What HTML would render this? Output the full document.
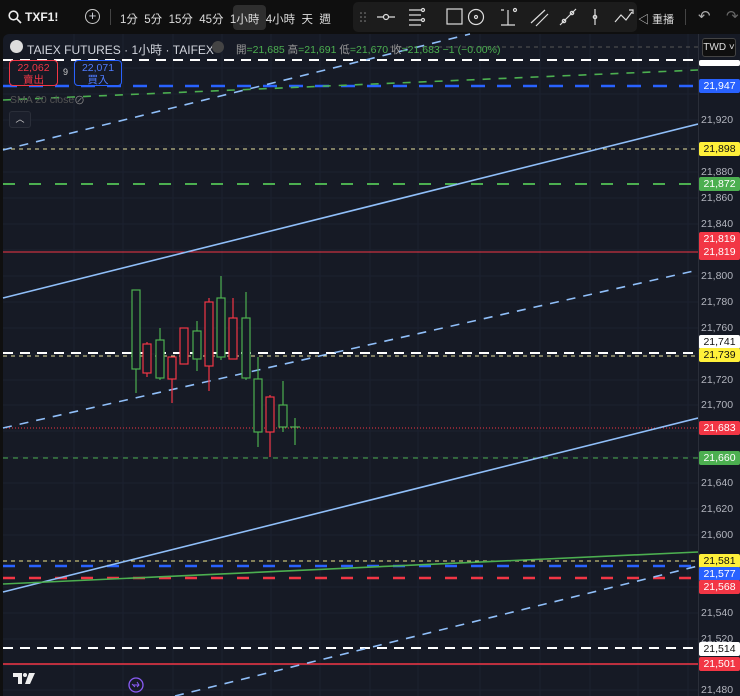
<!DOCTYPE html>
<html><head><meta charset="utf-8"><style>
*{margin:0;padding:0;box-sizing:border-box}
body{width:740px;height:696px;background:#0f0f0f;overflow:hidden;position:relative;font-family:"Liberation Sans","Noto Sans CJK TC",sans-serif;color:#d1d4dc}
.t{position:absolute;font-size:11px;white-space:nowrap}
.lab{position:absolute;left:699px;width:41px;height:14px;font-size:10.5px;line-height:14px;text-align:center;border-radius:2px}
.ax{position:absolute;left:701px;font-size:10.5px;color:#b2b5be}
</style></head><body>
<!-- top bar -->
<svg style="position:absolute;left:8px;top:10px" width="14" height="14" fill="none" stroke="#eee" stroke-width="1.6"><circle cx="5.5" cy="5.5" r="4.3"/><path d="M8.7 8.7L13 13"/></svg>
<div class="t" style="left:25px;top:10px;font-size:12px;font-weight:bold;color:#eee">TXF1!</div>
<div class="t" style="left:85px;top:9px;width:15px;height:15px;border:1.3px solid #ccc;border-radius:50%;text-align:center;line-height:12px;font-size:13px">+</div>
<div style="position:absolute;left:110px;top:9px;width:1px;height:16px;background:#444"></div>
<div style="position:absolute;left:233px;top:5px;width:33px;height:25px;background:#2e2e2e;border-radius:4px"></div>
<div class="t" style="left:120px;top:11px;font-size:11.5px;color:#ddd;word-spacing:0">1分&nbsp;&nbsp;5分&nbsp;&nbsp;15分&nbsp;&nbsp;45分&nbsp;&nbsp;1小時&nbsp;&nbsp;4小時&nbsp;&nbsp;天&nbsp;&nbsp;週</div>
<div style="position:absolute;left:353px;top:2px;width:284px;height:30px;background:#1c1c1c;border-radius:5px"></div>
<svg style="position:absolute;left:353px;top:2px" width="290" height="30" fill="none" stroke="#ddd" stroke-width="1.2">
<g fill="#888" stroke="none"><circle cx="8" cy="11" r=".8"/><circle cx="12" cy="11" r=".8"/><circle cx="8" cy="15" r=".8"/><circle cx="12" cy="15" r=".8"/><circle cx="8" cy="19" r=".8"/><circle cx="12" cy="19" r=".8"/></g>
<path d="M24 15h6M36 15h6"/><circle cx="33" cy="15" r="2.5"/>
<path d="M56 8h12M56 13h12M56 18h12M56 23h12"/><circle cx="70" cy="8" r="1.5"/><circle cx="70" cy="18" r="1.5"/>
<rect x="94" y="7" width="15" height="15"/>
<circle cx="123" cy="15" r="7.5"/><circle cx="123" cy="15" r="1.5"/>
<path d="M148 23h14M155 23V8M148 8h3"/><circle cx="162" cy="8" r="1.5"/>
<path d="M178 21l14-13M183 24l12-12"/>
<path d="M207 23l16-16"/><circle cx="211" cy="19" r="1.7"/><circle cx="219" cy="11" r="1.7"/>
<path d="M242 7v16"/><circle cx="242" cy="15" r="1.7"/>
<path d="M262 20l6-7 5 5 6-8M276 8h4v4"/>
</svg>
<div class="t" style="left:638px;top:11px;font-size:11px;color:#ddd">&#9665; 重播</div>
<div style="position:absolute;left:685px;top:9px;width:1px;height:16px;background:#444"></div>
<div class="t" style="left:698px;top:7px;font-size:15px;color:#aaa">&#8630;</div>
<div class="t" style="left:726px;top:7px;font-size:15px;color:#666">&#8631;</div>
<!-- chart -->
<div style="position:absolute;left:3px;top:34px;width:737px;height:662px;background:#161a25;border-radius:6px 0 0 0"></div>
<div style="position:absolute;left:698px;top:34px;width:1px;height:662px;background:#2a2e39"></div>
<svg style="position:absolute;left:0;top:0" width="698" height="696">
<g stroke="#1c2130" stroke-width="1">
<path d="M3 68H698M3 94H698M3 120H698M3 146H698M3 172H698M3 198H698M3 224H698M3 250H698M3 276H698M3 302H698M3 328H698M3 354H698M3 380H698M3 405H698M3 431H698M3 457H698M3 483H698M3 509H698M3 535H698M3 561H698M3 587H698M3 613H698M3 639H698M3 665H698M3 690H698"/>
<path d="M74 34V696M123 34V696M173 34V696M222 34V696M271 34V696M320 34V696M370 34V696M418 34V696M480 34V696M540 34V696M590 34V696M638 34V696M688 34V696"/>
</g>
<path d="M390 47H698" stroke="#555" stroke-dasharray="4 4"/>
<path d="M3 60H698" stroke="#fff" stroke-width="2" stroke-dasharray="10 7"/>
<path d="M3 86H698" stroke="#2962ff" stroke-width="2.5" stroke-dasharray="14 12"/>
<path d="M3 149H698" stroke="#e8e3a0" stroke-dasharray="4 4"/>
<path d="M3 184H698" stroke="#4caf50" stroke-width="2" stroke-dasharray="12 14"/>
<path d="M3 252H698" stroke="#f23645" stroke-width="1"/>
<path d="M3 353H698" stroke="#fff" stroke-width="2" stroke-dasharray="10 7"/>
<path d="M3 356H698" stroke="#e8e3a0" stroke-dasharray="4 4"/>
<path d="M3 428H698" stroke="#f23645" stroke-dasharray="1 2"/>
<path d="M3 458H698" stroke="#4caf50" stroke-dasharray="5 5"/>
<path d="M3 561H698" stroke="#f0e68c" stroke-dasharray="4 4"/>
<path d="M3 566H698" stroke="#2962ff" stroke-width="2.5" stroke-dasharray="12 14"/>
<path d="M3 578H698" stroke="#f23645" stroke-width="2.5" stroke-dasharray="12 14"/>
<path d="M3 648H698" stroke="#fff" stroke-width="2" stroke-dasharray="10 7"/>
<path d="M3 664H698" stroke="#f23645" stroke-width="1.5"/>
<g stroke="#90bff9" stroke-width="1.6" fill="none">
<path d="M3 298L698 124"/>
<path d="M3 592L698 418"/>
<path d="M3 150L470 34" stroke-dasharray="9 8"/>
<path d="M3 428L698 270" stroke-dasharray="9 8"/>
<path d="M175 696L698 566" stroke-dasharray="9 8"/>
</g>
<path d="M3 584L698 552" stroke="#4caf50" stroke-width="1.6"/>
<path d="M3 100L698 70" stroke="#4caf50" stroke-width="1.6" stroke-dasharray="8 8"/>
<g fill="none" stroke-width="1.2">
<g stroke="#4caf50">
<path d="M136 290V393"/><rect x="132" y="290" width="8" height="79" fill="#161a25"/>
<path d="M160 328V380"/><rect x="156" y="340" width="8" height="38" fill="#161a25"/>
<path d="M197 321V371"/><rect x="193" y="331" width="8" height="28" fill="#161a25"/>
<path d="M221 276V360"/><rect x="217" y="298" width="8" height="59" fill="#161a25"/>
<path d="M246 292V380"/><rect x="242" y="318" width="8" height="60" fill="#161a25"/>
<path d="M258 357V447"/><rect x="254" y="379" width="8" height="53" fill="#161a25"/>
<path d="M283 381V432"/><rect x="279" y="405" width="8" height="22" fill="#161a25"/>
<path d="M295 418V445M290 427H300"/>
</g>
<g stroke="#f23645">
<path d="M147 342V377"/><rect x="143" y="344" width="8" height="29" fill="#161a25"/>
<path d="M172 357V403"/><rect x="168" y="357" width="8" height="22" fill="#161a25"/>
<rect x="180" y="328" width="8" height="36" fill="#161a25"/>
<path d="M209 298V391"/><rect x="205" y="302" width="8" height="64" fill="#161a25"/>
<path d="M233 298V359"/><rect x="229" y="318" width="8" height="41" fill="#161a25"/>
<path d="M270 395V457"/><rect x="266" y="397" width="8" height="35" fill="#161a25"/>
</g>
</g>
<g fill="#eee"><path d="M13 673h9v11h-4v-7h-5z"/><circle cx="25" cy="675" r="2"/><path d="M29 673h6l-5 11h-5z"/></g>
<circle cx="136" cy="685" r="7" fill="none" stroke="#8a5cf6" stroke-width="1.3"/>
<path d="M132 684l3 3M133 685h6M137 682l2 3-2 2" stroke="#8a5cf6" fill="none"/>
</svg>
<!-- legend -->
<div style="position:absolute;left:10px;top:40px;width:13px;height:13px;border-radius:50%;background:#ddd"></div>
<div class="t" style="left:27px;top:41px;font-size:12px;color:#d1d4dc">TAIEX FUTURES · 1小時 · TAIFEX</div>
<div style="position:absolute;left:212px;top:41px;width:12px;height:12px;border-radius:50%;background:#444"></div>
<div class="t" style="left:236px;top:42px;font-size:10.5px;color:#4caf50"><span style="color:#999">開</span>=21,685 <span style="color:#999">高</span>=21,691 <span style="color:#999">低</span>=21,670 <span style="color:#999">收</span>=21,683 −1 (−0.00%)</div>
<div style="position:absolute;left:9px;top:60px;width:49px;height:26px;border:1px solid #f23645;border-radius:4px;background:#161a25;color:#f23645;font-size:10.5px;text-align:center;line-height:12px;padding-top:1px">22,062<br>賣出</div>
<div class="t" style="left:63px;top:67px;font-size:9px;color:#ccc">9</div>
<div style="position:absolute;left:74px;top:60px;width:48px;height:26px;border:1px solid #2962ff;border-radius:4px;background:#161a25;color:#4f7cff;font-size:10.5px;text-align:center;line-height:12px;padding-top:1px">22,071<br>買入</div>
<div class="t" style="left:10px;top:94px;font-size:10.5px;color:#555">SMA 20 close</div>
<div class="t" style="left:74px;top:92px;font-size:11px;color:#888">⊘</div>
<div style="position:absolute;left:9px;top:111px;width:22px;height:17px;border:1px solid #2a2e39;border-radius:3px;background:#1b1f2b;color:#ccc;font-size:9px;text-align:center;line-height:15px">︿</div>
<!-- axis -->
<div style="position:absolute;left:702px;top:38px;width:34px;height:19px;border:1px solid #444;border-radius:3px;background:#0f0f0f;color:#ddd;font-size:10px;line-height:17px;text-align:center">TWD ˅</div>
<div class="ax" style="top:114px">21,920</div>
<div class="ax" style="top:166px">21,880</div>
<div class="ax" style="top:192px">21,860</div>
<div class="ax" style="top:218px">21,840</div>
<div class="ax" style="top:270px">21,800</div>
<div class="ax" style="top:296px">21,780</div>
<div class="ax" style="top:322px">21,760</div>
<div class="ax" style="top:374px">21,720</div>
<div class="ax" style="top:399px">21,700</div>
<div class="ax" style="top:477px">21,640</div>
<div class="ax" style="top:503px">21,620</div>
<div class="ax" style="top:529px">21,600</div>
<div class="ax" style="top:607px">21,540</div>
<div class="ax" style="top:633px">21,520</div>
<div class="ax" style="top:684px">21,480</div>
<div class="lab" style="top:60px;height:6px;background:#fff"></div>
<div class="lab" style="top:79px;background:#2962ff;color:#fff">21,947</div>
<div class="lab" style="top:142px;background:#fff03a;color:#111">21,898</div>
<div class="lab" style="top:177px;background:#4caf50;color:#fff">21,872</div>
<div class="lab" style="top:232px;height:28px;background:#f23645;color:#fff;line-height:13px;padding-top:1px">21,819<br>21,819</div>
<div class="lab" style="top:335px;background:#fff;color:#111">21,741</div>
<div class="lab" style="top:348px;background:#fff03a;color:#111">21,739</div>
<div class="lab" style="top:421px;background:#f23645;color:#fff">21,683</div>
<div class="lab" style="top:451px;background:#4caf50;color:#fff">21,660</div>
<div class="lab" style="top:554px;background:#fff03a;color:#111">21,581</div>
<div class="lab" style="top:567px;background:#2962ff;color:#fff">21,577</div>
<div class="lab" style="top:580px;background:#f23645;color:#fff">21,568</div>
<div class="lab" style="top:642px;background:#fff;color:#111">21,514</div>
<div class="lab" style="top:657px;background:#f23645;color:#fff">21,501</div>
</body></html>
